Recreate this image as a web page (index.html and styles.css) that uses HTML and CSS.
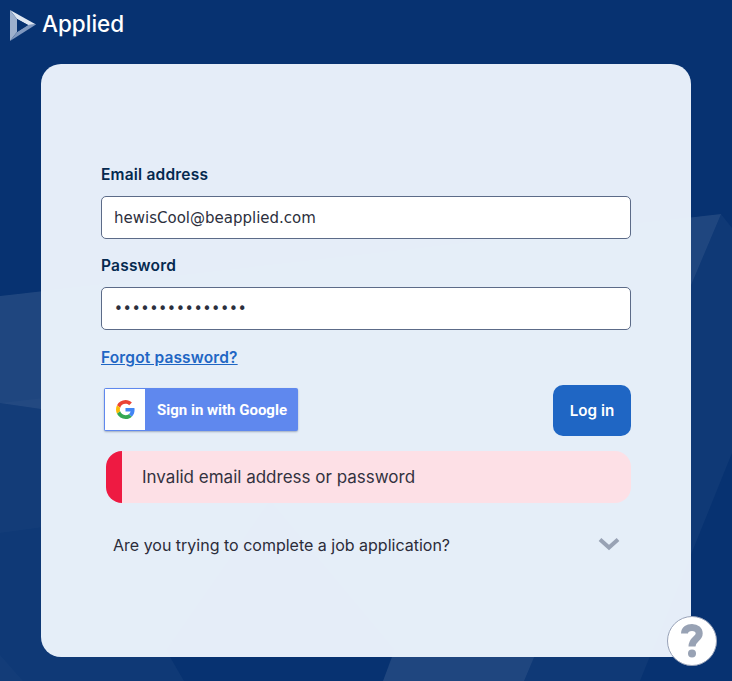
FILE: index.html
```html
<!DOCTYPE html>
<html lang="en">
<head>
<meta charset="utf-8">
<title>Applied - Log in</title>
<link rel="stylesheet" href="styles.css">
</head>
<body>
<svg class="backdrop" viewBox="0 0 732 681" aria-hidden="true">
  <polygon class="shape-mid" points="0,296 721,214 732,228 732,453 640,681 383,681 395,650 270,500 166,650 184,681 0,681"/>
  <polygon class="shape-light" points="0,296 721,214 524,681 383,681 460,470 0,403"/>
  <polygon class="shape-faint" points="0,403 460,350 460,470 0,533"/>
  <polygon class="shape-faint" points="0,655 23,681 0,681"/>
</svg>
<header class="topbar">
  <svg class="logo" viewBox="0 0 27 32" aria-hidden="true">
    <polygon points="0,0 26,14.500 18,15 7,9" fill="#dfe7f2"/>
    <polygon points="0,0 7,9 7,22 0,31" fill="#9db0cd"/>
    <polygon points="7,22 18,15 26,14.500 0,31" fill="#7f98bf"/>
    <polygon points="7,9 18,15 7,22" fill="#073271"/>
  </svg>
  <span class="brand">Applied</span>
</header>
<main class="card">
  <form class="form">
    <label class="label" for="email">Email address</label>
    <input class="input" id="email" type="text" value="hewisCool@beapplied.com">
    <label class="label label-next" for="password">Password</label>
    <input class="input input-pass" id="password" type="password" value="aaaaaaaaaaaaaaa">
    <a class="forgot" href="#">Forgot password?</a>
    <div class="actions">
      <button class="google" type="button">
        <span class="google-icon">
          <svg width="19" height="19" viewBox="0 0 48 48" aria-hidden="true">
            <path fill="#EA4335" d="M24 9.500c3.500 0 6.700 1.200 9.200 3.600l6.900-6.900C35.900 2.400 30.500 0 24 0 14.600 0 6.500 5.400 2.600 13.200l8 6.200C12.400 13.700 17.700 9.500 24 9.500z"/>
            <path fill="#4285F4" d="M46.900 24.500c0-1.600-.2-3.100-.4-4.500H24v9h12.900c-.6 3-2.200 5.500-4.700 7.200l7.700 6c4.500-4.200 7-10.300 7-17.700z"/>
            <path fill="#FBBC05" d="M10.500 28.600c-.5-1.400-.8-3-.8-4.600s.3-3.200.8-4.600l-8-6.200C.9 16.500 0 20.100 0 24s.9 7.500 2.600 10.800l7.900-6.200z"/>
            <path fill="#34A853" d="M24 48c6.500 0 11.900-2.100 15.900-5.800l-7.700-6c-2.200 1.500-4.900 2.300-8.200 2.300-6.300 0-11.600-4.200-13.500-9.900l-8 6.200C6.500 42.600 14.600 48 24 48z"/>
          </svg>
        </span>
        <span class="google-text">Sign in with Google</span>
      </button>
      <button class="login" type="button">Log in</button>
    </div>
    <div class="alert"><span class="alert-text">Invalid email address or password</span></div>
    <div class="accordion">
      <span class="accordion-text">Are you trying to complete a job application?</span>
      <svg class="chevron" width="22" height="14" viewBox="0 0 22 14" aria-hidden="true">
        <path d="M2 2.500 11 10.500 20 2.500" fill="none" stroke="#98a2b4" stroke-width="4"/>
      </svg>
    </div>
  </form>
</main>
<button class="help" type="button" aria-label="Help">
  <svg width="50" height="50" viewBox="0 0 50 50" aria-hidden="true">
    <path d="M17.500 17.500C17.500 13 21 11.500 25 11.500C29.500 11.500 32.200 14 32.200 17.500C32.200 23 25 23 25 30.500" fill="none" stroke="#98a2b4" stroke-width="7"/>
    <circle cx="25" cy="37.500" r="4" fill="#98a2b4"/>
  </svg>
</button>
</body>
</html>
```
FILE: styles.css
```css
* { box-sizing: border-box; }
html, body { height: 100%; }
body {
  margin: 0;
  background: #073271;
  font-family: "Inter", "Liberation Sans", sans-serif;
  overflow: hidden;
  position: relative;
}
.backdrop {
  position: absolute;
  inset: 0;
  width: 732px;
  height: 681px;
}
.shape-mid { fill: rgba(255,255,255,0.035); }
.shape-light { fill: rgba(255,255,255,0.07); }
.shape-faint { fill: rgba(255,255,255,0.02); }
.topbar {
  position: relative;
  height: 64px;
  display: flex;
  align-items: flex-start;
  gap: 5px;
  padding: 10px 0 0 10px;
}
.logo { width: 27px; height: 32px; }
.brand {
  color: #fff;
  font-size: 22.500px;
  line-height: 28px;
  font-weight: 500;
}
.card {
  position: relative;
  width: 650px;
  height: 593px;
  margin-left: 41px;
  border-radius: 20px;
  background: rgba(233,241,250,0.985);
  padding: 101px 60px 0;
}
.form { display: flex; flex-direction: column; }
.label {
  font-size: 15.500px;
  line-height: 20px;
  font-weight: 600;
  color: #04294f;
  margin-bottom: 11px;
  letter-spacing: 0.2px;
}
.label-next { margin-top: 17px; }
.input {
  width: 530px;
  height: 43px;
  border: 1px solid #5c6b88;
  border-radius: 5px;
  background: #fff;
  padding: 0 12px;
  font-family: "DejaVu Sans", sans-serif;
  font-size: 15px;
  color: #2c2f3d;
  outline: none;
}
.forgot {
  margin-top: 18px;
  align-self: flex-start;
  font-size: 15.500px;
  line-height: 20px;
  font-weight: 600;
  letter-spacing: 0.150px;
  color: #1f66c4;
}
.actions {
  margin-top: 17px;
  height: 51px;
  display: flex;
  justify-content: space-between;
  align-items: flex-start;
}
.google {
  margin: 3px 0 0 3px;
  width: 194px;
  height: 43px;
  padding: 1px;
  border: none;
  border-radius: 2px;
  background: #5f88ee;
  box-shadow: 0 1px 2px rgba(30,50,90,0.35);
  display: flex;
  align-items: stretch;
}
.google-icon {
  width: 40px;
  background: #fff;
  display: flex;
  align-items: center;
  justify-content: center;
}
.google-text {
  flex: 1;
  align-self: center;
  font-family: "Roboto", sans-serif;
  font-size: 15px;
  font-weight: 700;
  color: #fff;
  text-align: left;
  padding-left: 12px;
}
.login {
  width: 78px;
  height: 51px;
  border: none;
  border-radius: 10px;
  background: #1f66c4;
  color: #fff;
  font-family: inherit;
  font-size: 15.200px;
  font-weight: 600;
}
.alert {
  margin: 15px 0 0 5px;
  height: 52px;
  border-radius: 16px;
  background: #fde0e6;
  border-left: 16px solid #ee1a42;
  display: flex;
  align-items: center;
  padding-left: 20px;
}
.alert-text { font-size: 17px; color: #33323f; }
.accordion {
  margin-top: 32px;
  margin-left: 12px;
  margin-right: 11px;
  display: flex;
  justify-content: space-between;
  align-items: center;
}
.accordion-text { font-size: 16px; color: #2b2c3a; }
.chevron { margin-bottom: 2px; }
.help {
  position: absolute;
  left: 667px;
  top: 616px;
  width: 50px;
  height: 50px;
  border-radius: 50%;
  border: 1px solid #98a2b8;
  background: #fff;
  padding: 0;
  display: flex;
  align-items: center;
  justify-content: center;
}
.help svg { flex: none; }
```
